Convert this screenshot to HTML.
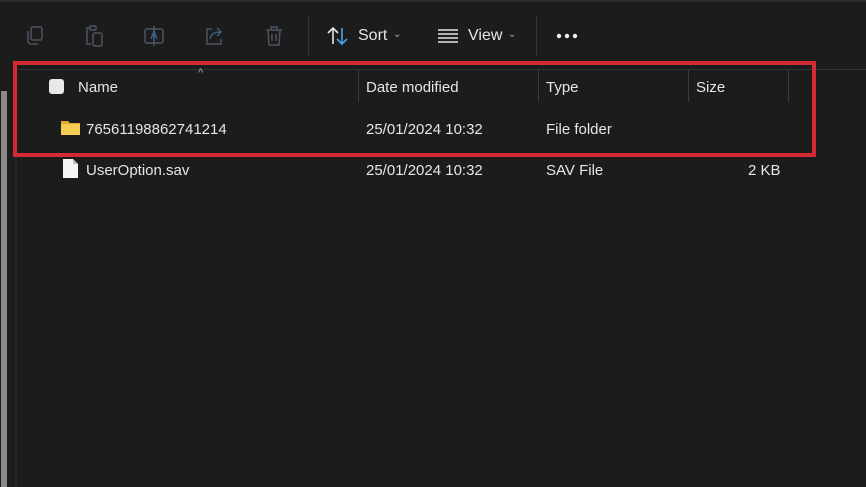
<!DOCTYPE html>
<html><head><meta charset="utf-8"><style>
*{margin:0;padding:0;box-sizing:border-box}
body{width:866px;height:487px;background:#1c1c1c;font-family:"Segoe UI","Liberation Sans",sans-serif;color:#e6e6e6;position:relative;overflow:hidden;font-size:15px}
.a{position:absolute}
.t{position:absolute;white-space:nowrap}
svg{position:absolute}
</style></head><body>
<div class="a" style="left:0;top:0;width:866px;height:2px;background:#2a2a2a"></div>
<svg style="left:22px;top:24px" width="24" height="24" viewBox="0 0 24 24" fill="none" stroke="#4b5560" stroke-width="1.5"><rect x="9" y="3" width="11" height="13" rx="2"/><path d="M6 7v10a3 3 0 0 0 3 3h7"/></svg>
<svg style="left:82px;top:24px" width="24" height="24" viewBox="0 0 24 24" fill="none" stroke="#4b5560" stroke-width="1.5"><path d="M8 4H5v16h4"/><rect x="8" y="2" width="6" height="4" rx="1"/><rect x="11" y="9" width="9" height="13" rx="2"/></svg>
<svg style="left:142px;top:24px" width="24" height="24" viewBox="0 0 24 24" fill="none" stroke="#4b5560" stroke-width="1.5"><rect x="3" y="5" width="18" height="14" rx="2"/><path d="M9 15l3-8 3 8M10 12h4" stroke="#3d5d80"/><path d="M12 2v20" stroke="#3d5d80"/></svg>
<svg style="left:202px;top:24px" width="24" height="24" viewBox="0 0 24 24" fill="none" stroke="#4b5560" stroke-width="1.5"><path d="M10 5H5v15h14v-5"/><path d="M8 15c1-5 5-7 10-7M15 4l4 4-4 4" stroke="#3d5d80"/></svg>
<svg style="left:262px;top:24px" width="24" height="24" viewBox="0 0 24 24" fill="none" stroke="#4b5560" stroke-width="1.5"><path d="M4 6h16M9 6V3h6v3M6 6l1 15h10l1-15M10 10v7M14 10v7"/></svg>
<div class="a" style="left:308px;top:16px;width:1px;height:40px;background:#333"></div>
<svg style="left:327px;top:26px" width="22" height="20" viewBox="0 0 22 20" fill="none" stroke-width="1.6"><path d="M6 18V2M1 7l5-5 5 5" stroke="#e6e6e6"/><path d="M15 2v16M10 13l5 5 5-5" stroke="#4aa3e8"/></svg>
<div class="t" style="left:358px;top:27px;font-size:16px">Sort</div>
<div class="t" style="left:393px;top:29px;font-size:10px;color:#aaa">&#8964;</div>
<svg style="left:437px;top:28px" width="22" height="16" viewBox="0 0 22 16" stroke="#e6e6e6" stroke-width="1.4"><path d="M1 2h20M1 6h20M1 10h20M1 14h20"/></svg>
<div class="t" style="left:468px;top:27px;font-size:16px">View</div>
<div class="t" style="left:508px;top:29px;font-size:10px;color:#aaa">&#8964;</div>
<div class="a" style="left:536px;top:16px;width:1px;height:40px;background:#333"></div>
<svg style="left:556px;top:33px" width="24" height="6" viewBox="0 0 24 6" fill="#eee"><circle cx="3" cy="3" r="2.2"/><circle cx="11" cy="3" r="2.2"/><circle cx="19" cy="3" r="2.2"/></svg>
<div class="a" style="left:15px;top:69px;width:851px;height:1px;background:#333"></div>
<div class="a" style="left:1px;top:91px;width:6px;height:396px;background:#8a8a8a"></div>
<div class="a" style="left:15px;top:70px;width:2px;height:417px;background:#262626"></div>
<div class="a" style="left:49px;top:79px;width:15px;height:15px;border-radius:3px;background:#e8e8e8"></div>
<div class="t" style="left:78px;top:79px">Name</div>
<div class="t" style="left:198px;top:67px;font-size:11px;color:#aaa">^</div>
<div class="a" style="left:358px;top:70px;width:1px;height:32px;background:#3a3a3a"></div>
<div class="t" style="left:366px;top:79px">Date modified</div>
<div class="a" style="left:538px;top:70px;width:1px;height:32px;background:#3a3a3a"></div>
<div class="t" style="left:546px;top:79px">Type</div>
<div class="a" style="left:688px;top:70px;width:1px;height:32px;background:#3a3a3a"></div>
<div class="t" style="left:696px;top:79px">Size</div>
<div class="a" style="left:788px;top:70px;width:1px;height:32px;background:#3a3a3a"></div>
<svg style="left:61px;top:120px" width="19" height="15" viewBox="0 0 19 15"><path d="M0 1h7l2 2h10v12H0z" fill="#e0a928"/><rect x="0" y="4" width="19" height="11" fill="#f5cd55"/></svg>
<div class="t" style="left:86px;top:121px">76561198862741214</div>
<div class="t" style="left:366px;top:121px">25/01/2024 10:32</div>
<div class="t" style="left:546px;top:121px">File folder</div>
<svg style="left:63px;top:159px" width="15" height="19" viewBox="0 0 15 19"><path d="M0 0h10l5 5v14H0z" fill="#f4f4f4"/><path d="M10 0v5h5" fill="#bbb"/></svg>
<div class="t" style="left:86px;top:162px">UserOption.sav</div>
<div class="t" style="left:366px;top:162px">25/01/2024 10:32</div>
<div class="t" style="left:546px;top:162px">SAV File</div>
<div class="t" style="left:748px;top:162px">2 KB</div>
<div class="a" style="left:13px;top:61px;width:803px;height:96px;border:4px solid #d42a33"></div>
</body></html>
